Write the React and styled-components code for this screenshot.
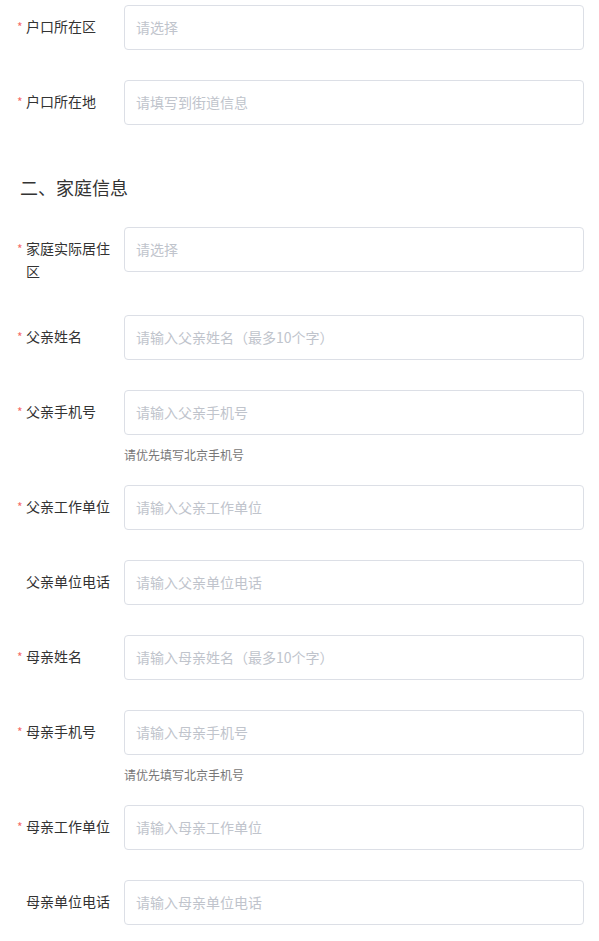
import React from "react";
import styled, { createGlobalStyle } from "styled-components";

const GlobalStyle = createGlobalStyle`
  html, body {
    margin: 0;
    padding: 0;
    background: #fff;
  }
  body {
    font-family: "Microsoft YaHei", "Noto Sans CJK SC", "Noto Sans", sans-serif;
    color: #333;
  }
  * {
    box-sizing: border-box;
  }
`;

const Page = styled.div`
  width: 599px;
  padding: 5px 15px 0 0;
`;

const Form = styled.form`
  display: flex;
  flex-direction: column;
`;

const Row = styled.div`
  display: flex;
  flex-direction: row;
  align-items: flex-start;
  margin-bottom: ${props => props.gap}px;
`;

const Label = styled.label`
  position: relative;
  flex: 0 0 124px;
  width: 124px;
  padding: 10px 12px 2px 26px;
  font-size: 14px;
  line-height: 23px;
  color: #333;
  word-break: break-all;
`;

const Star = styled.span`
  position: absolute;
  left: 17px;
  top: 10px;
  font-size: 12px;
  line-height: 23px;
  color: #f56c6c;
`;

const Field = styled.div`
  flex: 1;
  display: flex;
  flex-direction: column;
`;

const Input = styled.input`
  width: 100%;
  height: 45px;
  padding: 0 11px 2px;
  border: 1px solid #dcdfe6;
  border-radius: 4px;
  background: #fff;
  font-family: inherit;
  font-size: 14px;
  color: #333;
  outline: none;
  &::placeholder {
    color: #c0c4cc;
  }
`;

const Help = styled.div`
  margin-top: 10px;
  font-size: 12px;
  line-height: 20px;
  color: #777;
`;

const Heading = styled.h2`
  margin: 0;
  padding: 21px 0 29px 20px;
  font-size: 18px;
  font-weight: normal;
  line-height: 22px;
  color: #333;
`;

const top = [
  { label: "户口所在区", placeholder: "请选择", required: true },
  { label: "户口所在地", placeholder: "请填写到街道信息", required: true }
];

const family = [
  { label: "家庭实际居住区", placeholder: "请选择", required: true },
  { label: "父亲姓名", placeholder: "请输入父亲姓名（最多10个字）", required: true },
  { label: "父亲手机号", placeholder: "请输入父亲手机号", required: true, help: "请优先填写北京手机号" },
  { label: "父亲工作单位", placeholder: "请输入父亲工作单位", required: true },
  { label: "父亲单位电话", placeholder: "请输入父亲单位电话" },
  { label: "母亲姓名", placeholder: "请输入母亲姓名（最多10个字）", required: true },
  { label: "母亲手机号", placeholder: "请输入母亲手机号", required: true, help: "请优先填写北京手机号" },
  { label: "母亲工作单位", placeholder: "请输入母亲工作单位", required: true },
  { label: "母亲单位电话", placeholder: "请输入母亲单位电话" }
];

const FormRow = ({ item }) => (
  <Row gap={item.help ? 20 : 30}>
    <Label>
      {item.required && <Star>*</Star>}
      {item.label}
    </Label>
    <Field>
      <Input placeholder={item.placeholder} readOnly={item.placeholder === "请选择"} />
      {item.help && <Help>{item.help}</Help>}
    </Field>
  </Row>
);

export default function App() {
  return (
    <Page>
      <GlobalStyle />
      <Form>
        {top.map(item => (
          <FormRow key={item.label} item={item} />
        ))}
        <Heading>二、家庭信息</Heading>
        {family.map(item => (
          <FormRow key={item.label} item={item} />
        ))}
      </Form>
    </Page>
  );
}
